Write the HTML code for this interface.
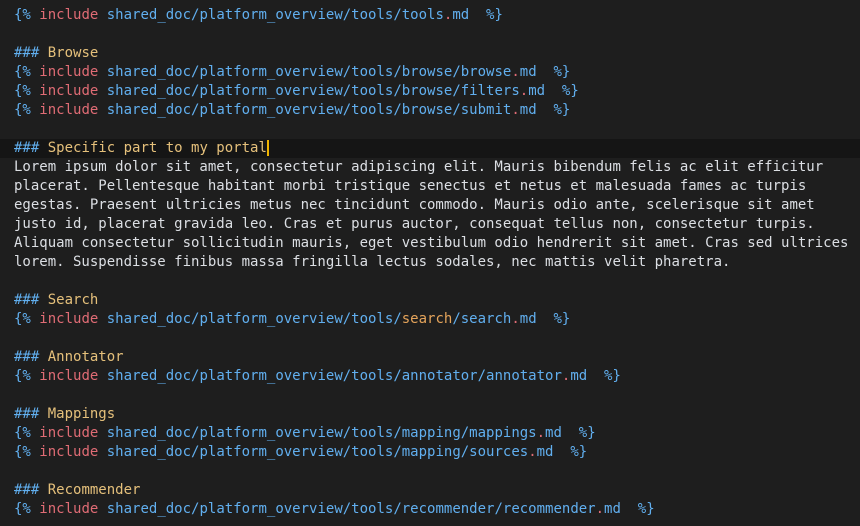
<!DOCTYPE html>
<html><head><style>
body{margin:0;background:#1e1e1e;width:860px;height:526px;overflow:hidden}
pre{margin:0;padding:6px 0 0 14px;font:14px/19px "DejaVu Sans Mono",monospace;color:#dcdfe4;white-space:pre}
.b{color:#61afef}.r{color:#e06c75}.y{color:#e5c07b}.o{color:#e5a45b}
.hl{display:block;background:#151515;margin-left:-14px;padding-left:14px}
.cur{border-right:2px solid #f0b400}
</style></head><body><pre><span class="b">{% </span><span class="r">include</span><span class="b"> shared_doc/platform_overview/tools/tools<span class="r">.</span>md  %}</span>

<span class="b">###</span><span class="y"> Browse</span>
<span class="b">{% </span><span class="r">include</span><span class="b"> shared_doc/platform_overview/tools/browse/browse<span class="r">.</span>md  %}</span>
<span class="b">{% </span><span class="r">include</span><span class="b"> shared_doc/platform_overview/tools/browse/filters<span class="r">.</span>md  %}</span>
<span class="b">{% </span><span class="r">include</span><span class="b"> shared_doc/platform_overview/tools/browse/submit<span class="r">.</span>md  %}</span>

<span class="hl"><span class="b">###</span><span class="y"> Specific part to my porta<span class="cur">l</span></span></span>Lorem ipsum dolor sit amet, consectetur adipiscing elit. Mauris bibendum felis ac elit efficitur
placerat. Pellentesque habitant morbi tristique senectus et netus et malesuada fames ac turpis
egestas. Praesent ultricies metus nec tincidunt commodo. Mauris odio ante, scelerisque sit amet
justo id, placerat gravida leo. Cras et purus auctor, consequat tellus non, consectetur turpis.
Aliquam consectetur sollicitudin mauris, eget vestibulum odio hendrerit sit amet. Cras sed ultrices
lorem. Suspendisse finibus massa fringilla lectus sodales, nec mattis velit pharetra.

<span class="b">###</span><span class="y"> Search</span>
<span class="b">{% </span><span class="r">include</span><span class="b"> shared_doc/platform_overview/tools/<span class="o">search</span>/search<span class="r">.</span>md  %}</span>

<span class="b">###</span><span class="y"> Annotator</span>
<span class="b">{% </span><span class="r">include</span><span class="b"> shared_doc/platform_overview/tools/annotator/annotator<span class="r">.</span>md  %}</span>

<span class="b">###</span><span class="y"> Mappings</span>
<span class="b">{% </span><span class="r">include</span><span class="b"> shared_doc/platform_overview/tools/mapping/mappings<span class="r">.</span>md  %}</span>
<span class="b">{% </span><span class="r">include</span><span class="b"> shared_doc/platform_overview/tools/mapping/sources<span class="r">.</span>md  %}</span>

<span class="b">###</span><span class="y"> Recommender</span>
<span class="b">{% </span><span class="r">include</span><span class="b"> shared_doc/platform_overview/tools/recommender/recommender<span class="r">.</span>md  %}</span>
</pre></body></html>
